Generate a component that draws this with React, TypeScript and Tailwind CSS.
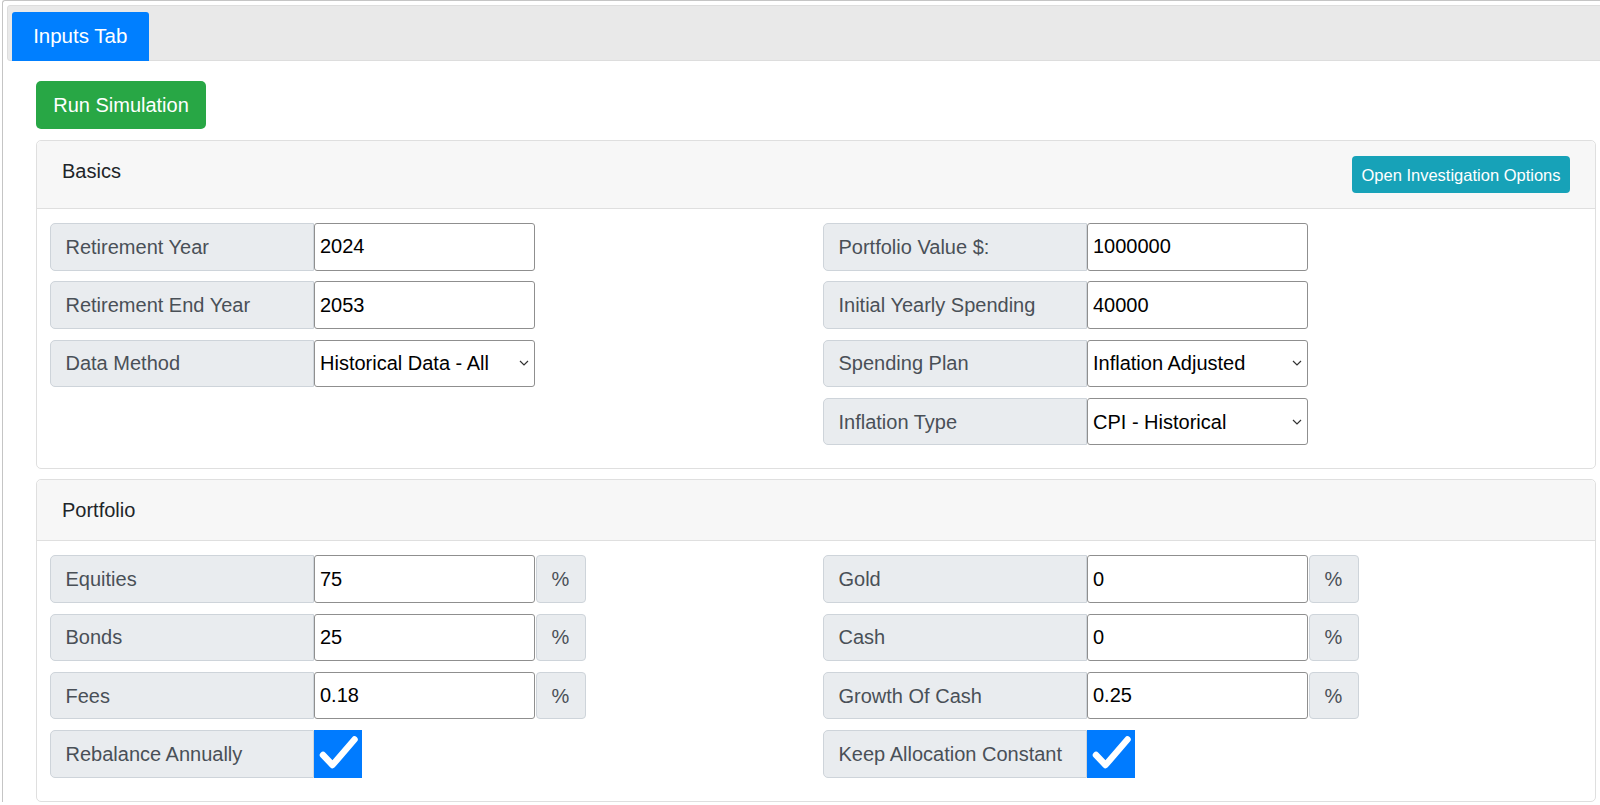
import React from 'react';

type Field =
  | { label: string; kind: 'input'; value: string; pct?: boolean }
  | { label: string; kind: 'select'; value: string }
  | { label: string; kind: 'check' };

const basicsLeft: Field[] = [
  { label: 'Retirement Year', kind: 'input', value: '2024' },
  { label: 'Retirement End Year', kind: 'input', value: '2053' },
  { label: 'Data Method', kind: 'select', value: 'Historical Data - All' },
];

const basicsRight: Field[] = [
  { label: 'Portfolio Value $:', kind: 'input', value: '1000000' },
  { label: 'Initial Yearly Spending', kind: 'input', value: '40000' },
  { label: 'Spending Plan', kind: 'select', value: 'Inflation Adjusted' },
  { label: 'Inflation Type', kind: 'select', value: 'CPI - Historical' },
];

const portfolioLeft: Field[] = [
  { label: 'Equities', kind: 'input', value: '75', pct: true },
  { label: 'Bonds', kind: 'input', value: '25', pct: true },
  { label: 'Fees', kind: 'input', value: '0.18', pct: true },
  { label: 'Rebalance Annually', kind: 'check' },
];

const portfolioRight: Field[] = [
  { label: 'Gold', kind: 'input', value: '0', pct: true },
  { label: 'Cash', kind: 'input', value: '0', pct: true },
  { label: 'Growth Of Cash', kind: 'input', value: '0.25', pct: true },
  { label: 'Keep Allocation Constant', kind: 'check' },
];

function Row({ field }: { field: Field }) {
  return (
    <div className="flex h-[47.5px]">
      <div className="w-[264.5px] h-full flex items-center pl-[15px] bg-[#e9ecef] border border-[#ced4da] rounded-l-[5px] text-[20px] text-[#495057]">
        {field.label}
      </div>

      {field.kind === 'input' && (
        <>
          <input
            type="text"
            defaultValue={field.value}
            className="w-[220.5px] h-full px-[5px] bg-white border border-[#8f8f8f] rounded-[3px] text-[20px] text-black outline-none"
          />
          {field.pct && (
            <div className="ml-[1px] w-[50px] h-full flex items-center justify-center bg-[#e9ecef] border border-[#ced4da] rounded-[4px] text-[20px] text-[#495057]">
              %
            </div>
          )}
        </>
      )}

      {field.kind === 'select' && (
        <div className="relative w-[220.5px] h-full">
          <select
            defaultValue={field.value}
            className="appearance-none w-full h-full pl-[5px] pr-[20px] bg-white border border-[#8f8f8f] rounded-[3px] text-[20px] text-black outline-none"
          >
            <option>{field.value}</option>
          </select>
          <svg
            className="absolute right-[6px] top-1/2 -translate-y-1/2 pointer-events-none"
            width="10"
            height="6"
            viewBox="0 0 10 6"
          >
            <path d="M1 1 L5 5 L9 1" fill="none" stroke="#333" strokeWidth="1.2" />
          </svg>
        </div>
      )}

      {field.kind === 'check' && (
        <div className="w-[48px] h-full flex items-center justify-center bg-[#007bff]">
          <svg width="48" height="48" viewBox="0 0 48 48">
            <path
              d="M9 25 L18.5 35 L40.5 9.5"
              fill="none"
              stroke="#fff"
              strokeWidth="6.5"
              strokeLinecap="round"
              strokeLinejoin="round"
            />
          </svg>
        </div>
      )}
    </div>
  );
}

function Card({
  title,
  action,
  left,
  right,
}: {
  title: string;
  action?: React.ReactNode;
  left: Field[];
  right: Field[];
}) {
  return (
    <div className="border border-[#dfdfdf] rounded-[5px] bg-white mb-[10px]">
      <div className="flex items-start justify-between px-[25px] py-[15px] bg-[#f7f7f7] border-b border-[#dfdfdf] rounded-t-[5px] text-[20px] leading-[30px] text-[#212529]">
        <span>{title}</span>
        {action}
      </div>
      <div className="grid grid-cols-[773px_1fr] pl-[12.5px] pt-[14px] pb-[23px]">
        <div className="flex flex-col gap-[10.8px]">
          {left.map((f) => (
            <Row key={f.label} field={f} />
          ))}
        </div>
        <div className="flex flex-col gap-[10.8px]">
          {right.map((f) => (
            <Row key={f.label} field={f} />
          ))}
        </div>
      </div>
    </div>
  );
}

export default function App() {
  return (
    <div className="w-full h-[805px] overflow-hidden bg-white font-['Liberation_Sans',Arial,sans-serif]">
      {/* Tabs frame, wider than the window on the right */}
      <div className="ml-[2px] w-[1627px] border-l border-t border-[#c5c5c5] rounded-tl-[3px] pt-[4px] pl-[4px] pr-[4px]">
        {/* Tab strip */}
        <div className="flex border border-[#dddddd] bg-[#e9e9e9] rounded-[3px] pl-[4px] pt-[6px]">
          <div className="w-[136.5px] h-[49px] -mb-px flex items-center justify-center bg-[#007fff] rounded-t-[3px] text-[20.5px] text-white">
            Inputs Tab
          </div>
        </div>

        {/* Panel */}
        <div className="pt-[20px] pl-[29px] pr-[29px]">
          <button className="w-[170px] h-[48px] mb-[11px] rounded-[5px] bg-[#28a745] text-[20px] text-white">
            Run Simulation
          </button>

          <Card
            title="Basics"
            action={
              <button className="w-[218px] h-[37px] rounded-[4px] bg-[#17a2b8] text-[16.5px] text-white">
                Open Investigation Options
              </button>
            }
            left={basicsLeft}
            right={basicsRight}
          />

          <Card title="Portfolio" left={portfolioLeft} right={portfolioRight} />
        </div>
      </div>
    </div>
  );
}
